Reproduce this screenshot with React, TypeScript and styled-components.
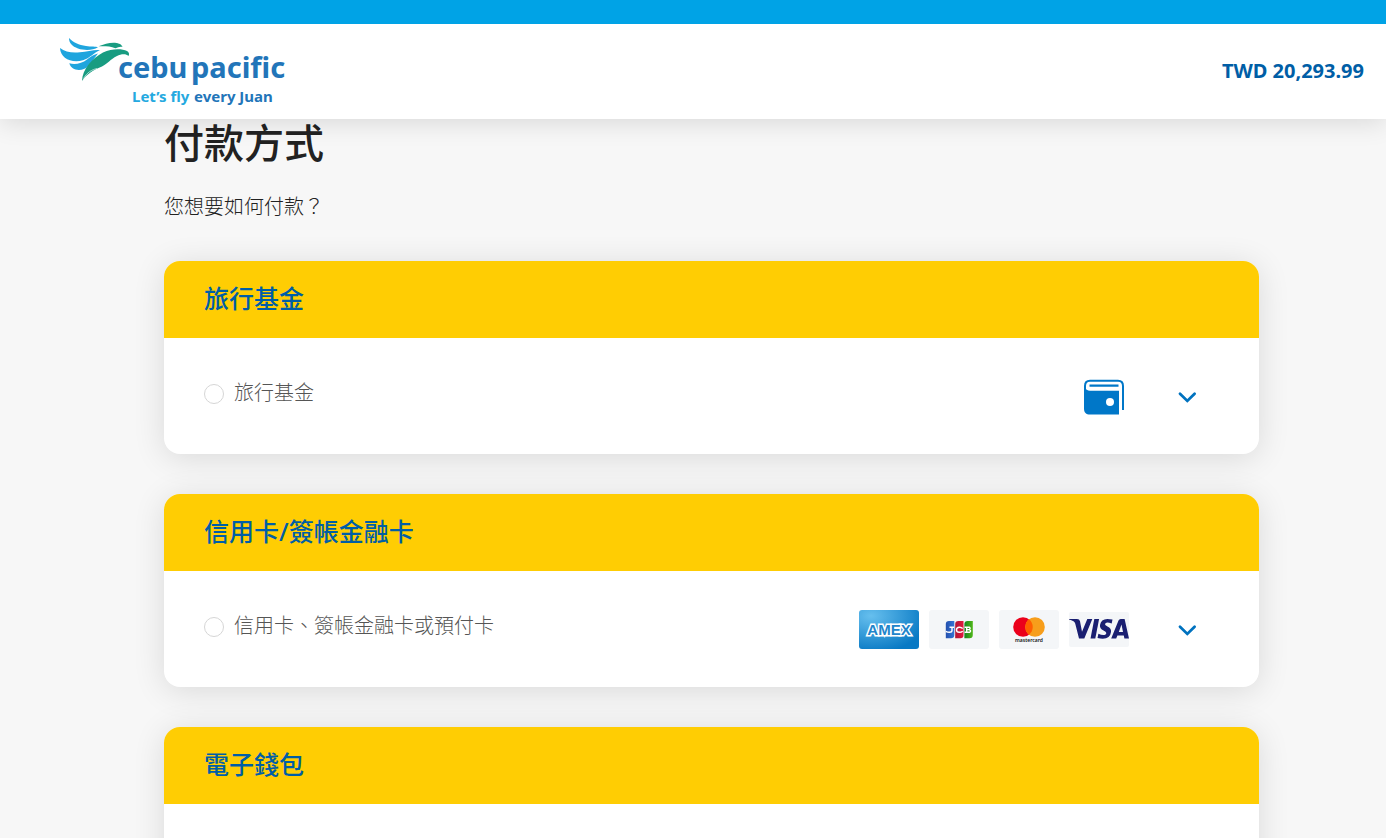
import React from 'react';
import styled, { createGlobalStyle } from 'styled-components';

const GlobalStyle = createGlobalStyle`
  * { box-sizing: border-box; }
  body {
    margin: 0;
    background: #f7f7f7;
    color: #222;
    font-family: "Noto Sans", "Noto Sans CJK TC", sans-serif;
  }
`;

const Page = styled.div`
  height: 100vh;
  overflow: hidden;
`;

const TopBar = styled.div`
  position: relative;
  z-index: 2;
  height: 24px;
  background: #00a3e6;
`;

const Header = styled.header`
  position: relative;
  z-index: 1;
  display: flex;
  align-items: center;
  justify-content: space-between;
  height: 95px;
  padding: 0 22px 0 56px;
  background: #fff;
  box-shadow: 0 4px 24px rgba(0, 0, 0, 0.12);
`;

const HomeLink = styled.a`
  display: block;
  height: 80px;
`;

const Price = styled.strong`
  padding-bottom: 2px;
  color: #005ea6;
  font-size: 20px;
  line-height: 28px;
  font-weight: 700;
`;

const Main = styled.main`
  padding: 0 127px 0 164px;
`;

const Title = styled.h1`
  margin: 0;
  font-size: 40px;
  line-height: 48px;
  font-weight: 500;
`;

const Lead = styled.p`
  margin: 25px 0 39px;
  font-size: 20px;
  line-height: 30px;
  font-weight: 300;
`;

const CardList = styled.div`
  display: flex;
  flex-direction: column;
  gap: 40px;
`;

const Card = styled.section`
  overflow: hidden;
  border-radius: 16px;
  background: #fff;
  box-shadow: 0 4px 32px rgba(0, 0, 0, 0.12);
`;

const CardTitle = styled.h2`
  margin: 0;
  padding: 19px 40px 22px;
  background: #ffcd03;
  color: #005ea6;
  font-size: 25px;
  line-height: 36px;
  font-weight: 500;
`;

const Option = styled.div`
  display: flex;
  align-items: center;
  min-height: 116px;
  padding: 0 56px 0 40px;
`;

const OptionLabel = styled.label`
  display: flex;
  flex: 1;
  align-items: center;
  gap: 10px;
  padding-bottom: 4px;
  color: #555;
  font-size: 20px;
  line-height: 30px;
  font-weight: 300;
`;

const OptionText = styled.span`
  padding-bottom: 2px;
`;

const Radio = styled.input`
  appearance: none;
  width: 20px;
  height: 20px;
  margin: 0;
  border: 1px solid #d6d6d6;
  border-radius: 50%;
  background: #fff;
  &:checked { border: 6px solid #0077c8; }
`;

const Brands = styled.div`
  display: flex;
  align-items: center;
  gap: 10px;
  margin-right: 42px;
`;

const Toggle = styled.button`
  display: grid;
  place-items: center;
  width: 32px;
  height: 32px;
  padding: 0;
  border: 0;
  background: none;
  cursor: pointer;
`;

const Logo = () => (
  <svg width="240" height="80" viewBox="56 32 240 80" role="img" aria-label="cebu pacific">
    <g fill="#1fa5de">
      <path d="M69 38C73 42.500 79 45 86 46C91 46.700 96 46.500 98 47.300C93 50.300 85 50.800 78 48.500C72 46.300 69 43 69 38Z" />
      <path d="M60 48C65 52 72 53.200 80 52.300C87 51.500 94 49.500 100 50C93.500 53 90 58 83 60.300C71 63.500 60.500 58 60 48Z" />
      <path d="M69.300 63.300C75 65.300 82 63.300 87 59.500C90.500 56.700 94 54.500 98 53.500C93.500 58.500 91 65.500 84.500 68.800C78 71.500 71 69.500 69.300 63.300Z" />
    </g>
    <g fill="#189c81">
      <path d="M98.500 46.300C104 44 110 42.300 115 42.700C119 43.100 122 44.500 122.500 47C120 46.300 118 47.300 115.500 48.200C110 46 105 46.300 98.500 46.300Z" />
      <path d="M82 81C82.500 69 92 58.500 103 52.500C112 48.200 122 48.500 127 51C129 52 129.700 54 128.500 56C126 53.500 121 54 117 56C110 59.500 108 63.500 102 66.500C92 70.500 87 74 82 81Z" />
    </g>
    <path d="M83.500 78.500C87 72.500 92 69.500 97 68.500" fill="none" stroke="#fff" strokeWidth="0.600" />
    <g fontFamily='"Noto Sans", sans-serif' fontWeight="700">
      <g fill="#2275b9" fontSize="29">
        <text x="118" y="78">cebu</text>
        <text x="191" y="78">pacific</text>
      </g>
      <g fontSize="15">
        <text x="132" y="102" fill="#25a9e0">Let’s fly</text>
        <text x="194" y="102" fill="#2275b9">every Juan</text>
      </g>
    </g>
  </svg>
);

const Wallet = () => (
  <svg width="50" height="39" viewBox="0 0 50 39" aria-hidden="true">
    <path d="M5 9V31.500C5 35.500 7 37.500 11 37.500H40V13.800H11C8.500 13.800 6.500 12.500 6 10Z" fill="#0077c8" />
    <path d="M44 33V9C44 5.500 42 3.700 39 3.700H11C7.500 3.700 6 6 6 9V16" fill="none" stroke="#0077c8" strokeWidth="2" />
    <path d="M39.500 8.700H10.500" stroke="#0077c8" strokeWidth="2.200" />
    <circle cx="31" cy="25" r="4" fill="#fff" />
  </svg>
);

const Amex = () => (
  <svg width="60" height="39" viewBox="0 0 60 39" role="img" aria-label="American Express">
    <defs>
      <radialGradient id="amex" cx="0.2" cy="0.15" r="0.95">
        <stop offset="0" stopColor="#66bfee" />
        <stop offset="1" stopColor="#0879c4" />
      </radialGradient>
    </defs>
    <rect width="60" height="39" rx="3" fill="url(#amex)" />
    <text x="30" y="25" textAnchor="middle" fontFamily='"Liberation Sans", sans-serif' fontWeight="700" fontSize="15" fill="none" stroke="#fff" strokeWidth="3">AMEX</text>
    <text x="30" y="25" textAnchor="middle" fontFamily='"Liberation Sans", sans-serif' fontWeight="700" fontSize="15" fill="#2185cb" aria-hidden="true">AMEX</text>
  </svg>
);

const Jcb = () => (
  <svg width="60" height="39" viewBox="0 0 60 39" role="img" aria-label="JCB">
    <defs>
      <linearGradient id="jcbBlue"><stop stopColor="#2450ad" /><stop offset="1" stopColor="#3474d6" /></linearGradient>
      <linearGradient id="jcbRed"><stop stopColor="#b01535" /><stop offset="1" stopColor="#e3173e" /></linearGradient>
      <linearGradient id="jcbGreen"><stop stopColor="#16851f" /><stop offset="1" stopColor="#51b719" /></linearGradient>
    </defs>
    <rect width="60" height="39" rx="3" fill="#f4f6f8" />
    <path d="M20 11H25.300V25Q25.300 28.300 22 28.300H16.800V14Q16.800 11 20 11Z" fill="url(#jcbBlue)" />
    <path d="M29.500 11H34.500V25Q34.500 28.300 31.500 28.300H26.200V14Q26.200 11 29.500 11Z" fill="url(#jcbRed)" />
    <path d="M38.700 11H43.800V25Q43.800 28.300 40.500 28.300H35.400V14Q35.400 11 38.700 11Z" fill="url(#jcbGreen)" />
    <g fill="none" stroke="#fff" strokeWidth="1.400">
      <path d="M20.500 17.200H25M23 17V20.500Q23 22.300 20.500 22.300Q18.500 22.300 16.800 21.300" />
      <path d="M33.700 18.500Q32 17 30.300 17.200Q27.500 17.500 27.500 19.700Q27.500 22.300 30.300 22.300Q32.500 22.300 33.700 21.200" />
      <path d="M35.600 17.200H40.200Q42 18.400 40.200 19.600H37.500H40.500Q42.700 21 40.500 22.300H35.600M37.700 17V22" />
    </g>
  </svg>
);

const Mastercard = () => (
  <svg width="60" height="39" viewBox="0 0 60 39" role="img" aria-label="Mastercard">
    <rect width="60" height="39" rx="3" fill="#f4f6f8" />
    <circle cx="24" cy="17" r="9.800" fill="#eb001b" />
    <circle cx="36" cy="17" r="9.800" fill="#f79e1b" />
    <path d="M30 9.300A9.800 9.800 0 0 1 30 24.700A9.800 9.800 0 0 1 30 9.300Z" fill="#ff5f00" />
    <text x="30" y="32" textAnchor="middle" fontFamily='"Noto Sans", sans-serif' fontWeight="600" fontSize="5" fill="#111">mastercard</text>
  </svg>
);

const Visa = () => (
  <svg width="60" height="35" viewBox="0 0 60 35" role="img" aria-label="Visa">
    <rect width="60" height="35" rx="2" fill="#f4f6f8" />
    <g fill="#1a1f71">
      <path d="M0 7H8Q10.500 7 11 9.300L13 19.700L18.300 7H23.300L15.300 26.500H10L6.200 11.500Q5.800 10 4.500 9.300Q2.500 8.200 0 7.600Z" />
      <path d="M25.300 7H30.100L26.300 26.500H21.500Z" />
      <path d="M43.500 7.600L42.700 11.500Q36.500 9.200 36 12.200Q36 13.300 38.500 14.500Q42.500 16.400 42 20Q41 28.700 28.500 26L29.400 21.800Q33 23.500 35.500 23Q37.500 22.500 37.300 21Q37.200 19.800 34.500 18.600Q30.500 16.500 31 12.900Q32.300 4.800 43.500 7.600Z" />
      <path fillRule="evenodd" d="M51.700 7H55.600L60 26.500H55.400L54.800 23.500H48.400L47.200 26.500H42.200L49.500 8.500Q50.200 7 51.700 7ZM52.500 12.500L49.800 19.900H54Z" />
    </g>
  </svg>
);

const Chevron = () => (
  <svg width="20" height="20" viewBox="0 0 20 20" fill="none" aria-hidden="true">
    <path d="M3 7.700L10.300 14.900L17.600 7.700" stroke="#0072bf" strokeWidth="2.800" strokeLinecap="round" strokeLinejoin="miter" />
  </svg>
);

interface Method {
  id: string;
  title: string;
  label: string;
  brands: React.ReactNode;
}

const methods: Method[] = [
  { id: 'fund', title: '旅行基金', label: '旅行基金', brands: <Wallet /> },
  {
    id: 'card',
    title: '信用卡/簽帳金融卡',
    label: '信用卡、簽帳金融卡或預付卡',
    brands: <><Amex /><Jcb /><Mastercard /><Visa /></>,
  },
];

export default function App() {
  return (
    <Page>
      <GlobalStyle />
      <TopBar />
      <Header>
        <HomeLink href="#"><Logo /></HomeLink>
        <Price>TWD 20,293.99</Price>
      </Header>
      <Main lang="zh-Hant">
        <Title>付款方式</Title>
        <Lead>您想要如何付款？</Lead>
        <CardList>
          {methods.map((m) => (
            <Card key={m.id}>
              <CardTitle>{m.title}</CardTitle>
              <Option>
                <OptionLabel>
                  <Radio type="radio" name="method" value={m.id} />
                  <OptionText>{m.label}</OptionText>
                </OptionLabel>
                <Brands>{m.brands}</Brands>
                <Toggle type="button" aria-label={m.label}><Chevron /></Toggle>
              </Option>
            </Card>
          ))}
          <Card>
            <CardTitle>電子錢包</CardTitle>
            <Option />
          </Card>
        </CardList>
      </Main>
    </Page>
  );
}
